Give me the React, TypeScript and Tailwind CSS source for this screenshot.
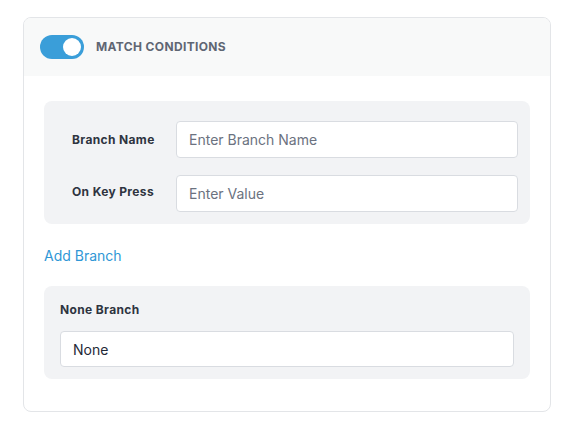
import React, { useState } from 'react';

const App: React.FC = () => {
  const [enabled, setEnabled] = useState(true);
  const [branchName, setBranchName] = useState('');
  const [keyValue, setKeyValue] = useState('');
  const [noneBranch, setNoneBranch] = useState('None');

  return (
    <div className="min-h-[423px] w-[570px] bg-white pt-[17px] pl-[23px] font-['Inter',sans-serif]">
      <div className="w-[528px] rounded-lg border border-[#e3e5e8] bg-white overflow-hidden">
        {/* header */}
        <div className="flex h-[58px] items-center gap-3 bg-[#f8f9f9] pl-[16px]">
          <button
            onClick={() => setEnabled(!enabled)}
            className={`relative h-[24px] w-[44px] rounded-full transition ${enabled ? 'bg-[#3a9ed9]' : 'bg-gray-300'}`}
          >
            <span
              className={`absolute top-[3px] h-[18px] w-[18px] rounded-full bg-white transition-all ${enabled ? 'left-[23px]' : 'left-[3px]'}`}
            />
          </button>
          <span className="text-[12px] font-bold uppercase tracking-[0.03em] text-[#5f6673]">Match Conditions</span>
        </div>

        <div className="px-[20px] pt-[25px] pb-[32px]">
          {/* branch panel */}
          <div className="rounded-lg bg-[#f2f3f5] pt-[20px] pr-[12px] pb-[12px] pl-[28px]">
            <div className="flex items-center">
              <label className="w-[104px] text-[12px] font-bold tracking-[0.03em] text-[#2e3440]">Branch Name</label>
              <input
                value={branchName}
                onChange={e => setBranchName(e.target.value)}
                placeholder="Enter Branch Name"
                className="h-[37px] flex-1 rounded border border-[#d9dce1] bg-white px-[12px] text-[14px] text-[#1f2937] outline-none placeholder:text-[#6b7280]"
              />
            </div>
            <div className="mt-[17px] flex items-start">
              <label className="w-[104px] pt-[8px] text-[12px] font-bold tracking-[0.03em] text-[#2e3440]">On Key Press</label>
              <input
                value={keyValue}
                onChange={e => setKeyValue(e.target.value)}
                placeholder="Enter Value"
                className="h-[37px] flex-1 rounded border border-[#d9dce1] bg-white px-[12px] text-[14px] text-[#1f2937] outline-none placeholder:text-[#6b7280]"
              />
            </div>
          </div>

          <div className="pt-[22px] pb-[20px]">
            <a className="block w-fit cursor-pointer text-[14px] leading-5 text-[#2f97d6]">Add Branch</a>
          </div>

          {/* none branch */}
          <div className="rounded-lg bg-[#f2f3f5] px-[16px] pt-[16px] pb-[12px]">
            <p className="text-[12px] leading-4 font-bold tracking-[0.03em] text-[#2e3440]">None Branch</p>
            <input
              value={noneBranch}
              onChange={e => setNoneBranch(e.target.value)}
              className="mt-[13px] block h-[36px] w-full rounded border border-[#d9dce1] bg-white px-[12px] text-[14px] text-[#1f2937] outline-none"
            />
          </div>
        </div>
      </div>
    </div>
  );
};

export default App;
